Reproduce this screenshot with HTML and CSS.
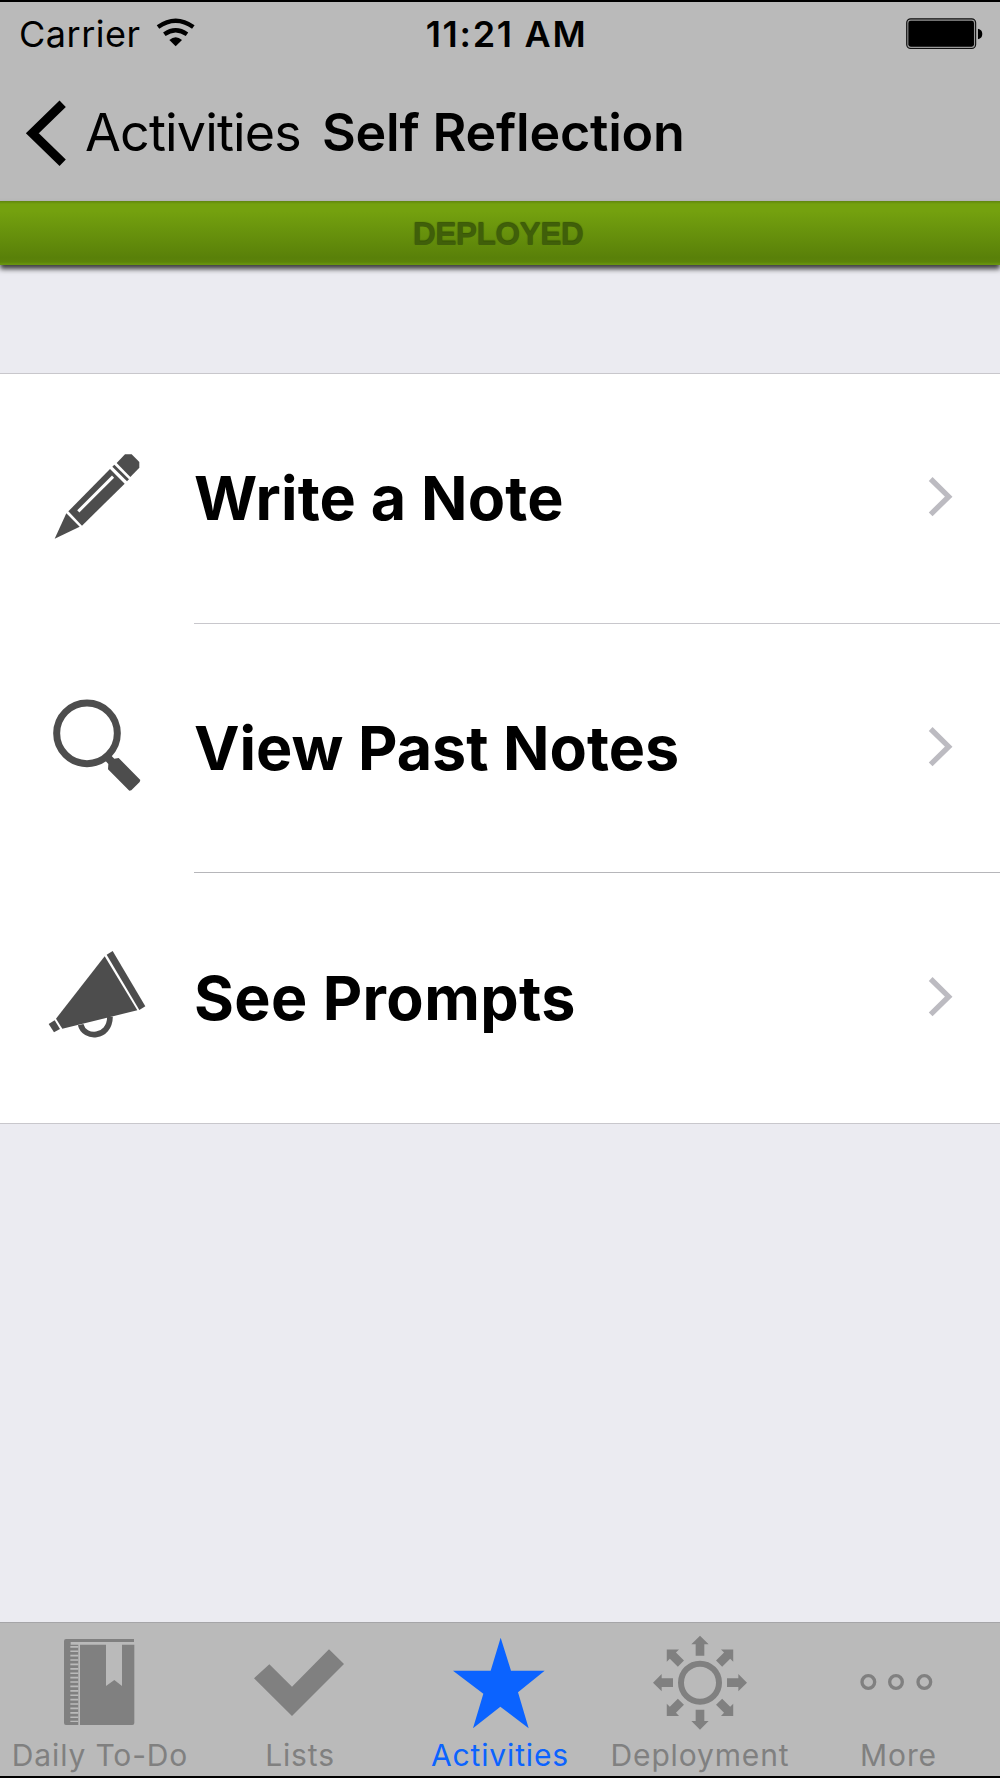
FILE: index.html
```html
<!DOCTYPE html>
<html lang="en">
<head>
    <meta charset="UTF-8">
    <meta name="viewport" content="width=device-width, initial-scale=1.0">
    <title>Self Reflection</title>
    <link rel="stylesheet" href="styles.css">
</head>
<body>
    <div class="screen">
        <header class="top">
            <div class="status-bar">
                <div class="carrier">
                    <span>Carrier</span>
                    <svg class="wifi" viewBox="468 50 120 90">
                        <path d="M474 80Q527 42 580 80" fill="none" stroke="#000" stroke-width="13"/>
                        <path d="M493 102Q527 78 561 102" fill="none" stroke="#000" stroke-width="13"/>
                        <path d="M508 119Q527 102 546 119L527 138Z"/>
                    </svg>
                </div>
                <span class="time">11:21 AM</span>
                <svg class="battery" viewBox="615 50 240 100">
                    <rect x="620" y="55.500" width="207" height="89" rx="12" fill="#999" stroke="#111" stroke-width="3.500"/>
                    <rect x="625" y="61" width="197" height="78" rx="7"/>
                    <path d="M834 85Q847 88 847 101T834 117Z"/>
                </svg>
            </div>
            <nav class="nav-bar">
                <svg class="back" viewBox="75 300 126 200">
                    <path d="M188 311L97 400L188 488" fill="none" stroke="#000" stroke-width="27"/>
                </svg>
                <span class="back-label">Activities</span>
                <h1>Self Reflection</h1>
            </nav>
        </header>

        <div class="banner">DEPLOYED</div>

        <main class="content">
            <ul class="list">
                <li class="row">
                    <svg class="icon" viewBox="0 0 390 390">
                        <path d="M74 323L109 247L149 287Z"/>
                        <path d="M115 241L240 114L284 158L156 284Z"/>
                        <path d="M247 107L253 101L297 145L291 151Z"/>
                        <path d="M260 96L285 70H305L328 93V110L301 138Z"/>
                        <path d="M148 238L246 140" stroke="#fff" stroke-width="9" stroke-linecap="square"/>
                    </svg>
                    <div class="cell">
                        <span class="write">Write a Note</span>
                        <svg class="chevron" viewBox="0 0 75 126"><path d="M8 9L62 62L8 115"/></svg>
                    </div>
                </li>
                <li class="row">
                    <svg class="icon" viewBox="0 0 390 390">
                        <circle cx="171" cy="160" r="91" fill="none" stroke="#4d4d4d" stroke-width="21"/>
                        <path d="M222 238L239 222L253 236L266 234L331 300L329 306L304 331L298 332L234 268L235 252Z"/>
                    </svg>
                    <div class="cell">
                        <span>View Past Notes</span>
                        <svg class="chevron" viewBox="0 0 75 126"><path d="M8 9L62 62L8 115"/></svg>
                    </div>
                </li>
                <li class="row">
                    <svg class="icon" viewBox="0 0 390 390">
                        <path d="M230 74L248 63L346 229L328 240Z"/>
                        <path d="M224 79L322 241L97 296L78 266Z"/>
                        <path d="M56 282L74 271L90 297L72 307Z"/>
                        <path d="M152 284C162 327 239 327 240 260" fill="none" stroke="#4d4d4d" stroke-width="17"/>
                    </svg>
                    <div class="cell">
                        <span class="prompts">See Prompts</span>
                        <svg class="chevron" viewBox="0 0 75 126"><path d="M8 9L62 62L8 115"/></svg>
                    </div>
                </li>
            </ul>
        </main>

        <footer class="tab-bar">
            <div class="tab">
                <svg viewBox="150 60 300 300">
                    <path d="M198 87H402V96H212V104H235V345H198Q192 345 192 339V93Q192 87 198 87Z"/>
                    <path d="M223 108V336" stroke="#bababa" stroke-width="24" stroke-dasharray="5 8.200"/>
                    <path d="M240 104H318V228L343 210L366 228V104H403V339Q403 345 397 345H240Z"/>
                </svg>
                <span>Daily To-Do</span>
            </div>
            <div class="tab">
                <svg viewBox="750 60 300 300">
                    <path d="M762 205L808 163L876 230L987 118L1032 162L876 318Z"/>
                </svg>
                <span>Lists</span>
            </div>
            <div class="tab active">
                <svg viewBox="150 60 300 300">
                    <path d="M302 83L333 182H434L354 247L386 355L301 290L219 355L250 251L159 182H272Z"/>
                </svg>
                <span>Activities</span>
            </div>
            <div class="tab">
                <svg viewBox="150 60 300 300">
                    <defs>
                        <path id="arrow" d="M300 77L326 103H313V137H287V103H274Z"/>
                    </defs>
                    <circle cx="300" cy="218" r="57" fill="none" stroke="#808080" stroke-width="18"/>
                    <use href="#arrow"/>
                    <use href="#arrow" transform="rotate(45 300 218)"/>
                    <use href="#arrow" transform="rotate(90 300 218)"/>
                    <use href="#arrow" transform="rotate(135 300 218)"/>
                    <use href="#arrow" transform="rotate(180 300 218)"/>
                    <use href="#arrow" transform="rotate(225 300 218)"/>
                    <use href="#arrow" transform="rotate(270 300 218)"/>
                    <use href="#arrow" transform="rotate(315 300 218)"/>
                </svg>
                <span>Deployment</span>
            </div>
            <div class="tab">
                <svg viewBox="750 60 300 300">
                    <g fill="none" stroke="#808080" stroke-width="10">
                        <circle cx="805" cy="216" r="19"/>
                        <circle cx="888" cy="216" r="19"/>
                        <circle cx="973" cy="216" r="19"/>
                    </g>
                </svg>
                <span class="more">More</span>
            </div>
        </footer>
    </div>
</body>
</html>
```
FILE: styles.css
```css
:root {
    --bar-color: #bababa;
    --page-bg: #ebebf1;
    --line-color: #c8c7cc;
    --icon-color: #4d4d4d;
    --tab-color: #808080;
    --active-color: #0b63ff;
}

* {
    box-sizing: border-box;
}

body {
    margin: 0;
    font-family: Inter, "Liberation Sans", sans-serif;
    background-color: var(--page-bg);
    color: #000;
}

svg {
    display: block;
    flex: none;
}

span, h1 {
    white-space: nowrap;
}

.screen {
    width: 1000px;
    height: 1778px;
    display: flex;
    flex-direction: column;
    border-top: 2px solid #000;
    border-bottom: 2px solid #000;
    overflow: hidden;
}

.top {
    height: 199px;
    background-color: var(--bar-color);
}

.status-bar {
    height: 64px;
    padding: 0 15px 0 19px;
    display: grid;
    grid-template-columns: 1fr auto 1fr;
    align-items: center;
    font-size: 36px;
}

.carrier {
    display: flex;
    align-items: center;
    gap: 15px;
    letter-spacing: 0.5px;
}

.wifi {
    width: 40px;
    height: 30px;
    margin-bottom: 5px;
}

.time {
    margin-left: 9px;
    font-weight: 600;
    letter-spacing: 1.7px;
}

.battery {
    width: 80px;
    height: 33.3px;
    justify-self: end;
}

.nav-bar {
    height: 133px;
    padding-left: 25px;
    display: flex;
    align-items: center;
    font-size: 52px;
}

.back {
    width: 42px;
    height: 66.7px;
    margin: 2px 18px 0 0;
}

.back-label {
    letter-spacing: -0.85px;
}

h1 {
    margin: 0 0 0 21px;
    font-size: 52px;
    font-weight: 600;
    letter-spacing: -0.2px;
}

.banner {
    position: relative;
    height: 64px;
    flex: none;
    padding-right: 4px;
    background: linear-gradient(#5f850f 0, #74a10f 3px, #74a10f 10px, #598009 57px, #5b830a 61px, #68940e 63px);
    box-shadow: 0 4px 5px rgba(0, 0, 0, 0.75);
    color: #405f0a;
    font: bold 32px/66px "Liberation Sans", Arial, sans-serif;
    letter-spacing: -0.7px;
    text-align: center;
    text-shadow: 0 -1px 1px rgba(20, 40, 0, 0.6);
}

.content {
    flex: 1;
    padding-top: 108px;
}

.list {
    margin: 0;
    padding: 0;
    list-style: none;
    background-color: #fff;
    border-top: 1px solid var(--line-color);
    border-bottom: 1px solid var(--line-color);
}

.row {
    height: 249.5px;
    padding-left: 30px;
    display: flex;
    align-items: center;
}

.icon {
    width: 130px;
    height: 130px;
    margin: 0 34px 6px 0;
    fill: var(--icon-color);
}

.cell {
    flex: 1;
    height: 100%;
    padding-right: 47px;
    display: flex;
    align-items: center;
    justify-content: space-between;
    border-bottom: 1px solid var(--line-color);
    font-size: 61px;
    font-weight: 700;
}

.row:nth-child(2) .cell {
    border-color: #b6b6ba;
}

.row:last-child .cell {
    border-bottom: none;
}

.write {
    letter-spacing: 0.2px;
}

.prompts {
    letter-spacing: 0.4px;
}

.chevron {
    width: 25px;
    height: 42px;
    margin-bottom: 2px;
    fill: none;
    stroke: #bcbbc1;
    stroke-width: 16;
}

.tab-bar {
    height: 154px;
    display: grid;
    grid-template-columns: repeat(5, 1fr);
    background-color: var(--bar-color);
    border-top: 1px solid #a5a5a8;
}

.tab {
    padding-top: 7px;
    display: flex;
    flex-direction: column;
    align-items: center;
    color: var(--tab-color);
    fill: currentColor;
    font-size: 30px;
    line-height: 36px;
    letter-spacing: 0.85px;
}

.tab svg {
    width: 100px;
    height: 100px;
    margin-bottom: 7px;
}

.tab .more {
    margin-right: 3px;
}

.active {
    color: var(--active-color);
}
```
